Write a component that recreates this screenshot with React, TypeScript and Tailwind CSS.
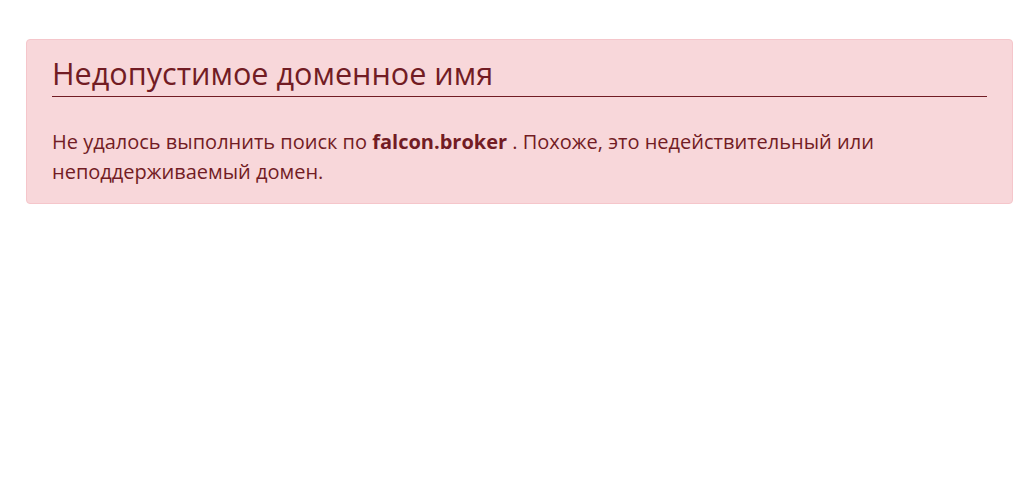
export default function App() {
	return (
		<div
			className="min-h-screen bg-white pt-[39px] pl-[26px] pr-[9px]"
			style={{ fontFamily: '"Open Sans", "Noto Sans", sans-serif' }}
		>
			<div className="rounded-[4px] border border-[#f5c6cb] bg-[#f8d7da] px-[25px] pt-[13px] pb-[16px] text-[#721c24]">
				<h1 className="border-b border-[#721c24] pb-[3px] text-[30.6px] leading-[40px] font-normal">
					Недопустимое доменное имя
				</h1>
				<p className="mt-[30px] text-[20px] leading-[30px]">
					Не удалось выполнить поиск по <b className="font-bold">falcon.broker</b> . Похоже, это недействительный или неподдерживаемый домен.
				</p>
			</div>
		</div>
	);
}
